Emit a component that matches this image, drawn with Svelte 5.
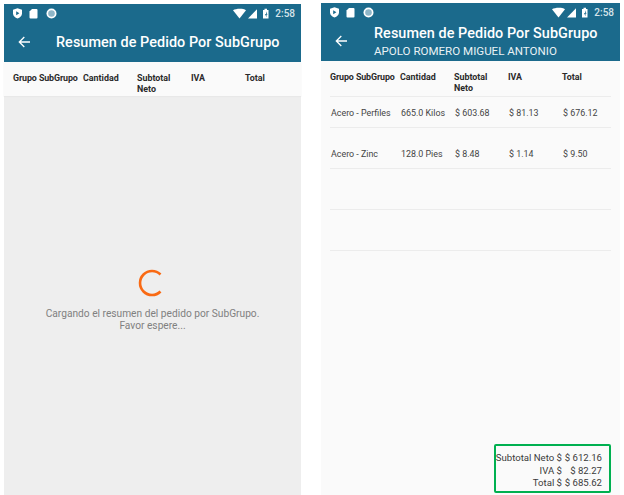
<script>
  const cols = ["Grupo SubGrupo", "Cantidad", "Subtotal Neto", "IVA", "Total"];
  const rows = [
    ["Acero - Perfiles", "665.0 Kilos", "$ 603.68", "$ 81.13", "$ 676.12"],
    ["Acero - Zinc", "128.0 Pies", "$ 8.48", "$ 1.14", "$ 9.50"],
    ["", "", "", "", ""],
    ["", "", "", "", ""]
  ];
  const totals = [
    ["Subtotal Neto $", "$ 612.16"],
    ["IVA $", "$ 82.27"],
    ["Total $", "$ 685.62"]
  ];
</script>

{#snippet statusbar()}
  <div class="status">
    <svg class="left-icons" width="46" height="11" viewBox="0 0 46 11">
      <path d="M1 1.800 5.500.3 10 1.800v3.700c0 2.400-2 4.100-4.500 5C3 9.600 1 7.900 1 5.500z" fill="#fff" />
      <path d="M4.200 3.200v4l3.200-2z" fill="#1b6a8c" />
      <path d="M20 1h4.500a1 1 0 0 1 1 1v7.500a1 1 0 0 1-1 1h-6a1 1 0 0 1-1-1V3.500z" fill="#fff" />
      <circle cx="39.500" cy="5.500" r="5" fill="#fff" />
      <circle cx="39.500" cy="5.500" r="3.300" fill="#8fb6c8" />
    </svg>
    <svg class="right-icons" width="37" height="11" viewBox="0 0 37 11">
      <path d="M0 2.300C3 .5 10 .2 13 2.300L6.500 10.500z" fill="#fff" />
      <path d="M15 10.500 24 1.200v9.300z" fill="#fff" />
      <path d="M30 2h1.500V.8h2.500V2h1.500v8.500H30z" fill="#fff" />
      <path d="M33.200 3.200v2.800h-1.200l1.500 3.200V6.800h1z" fill="#1b6a8c" />
    </svg>
    <span class="clock">2:58</span>
  </div>
{/snippet}

{#snippet arrow()}
  <svg class="arrow" width="12" height="12" viewBox="0 0 12 12" fill="none" stroke="#fff" stroke-width="1.300">
    <path d="M12 6H1.500M6.300 1 1.300 6l5 5" />
  </svg>
{/snippet}

{#snippet thead()}
  <div class="tr head">
    {#each cols as c}
      <div class="cell">{c}</div>
    {/each}
  </div>
{/snippet}

<div class="page">
  <section class="phone">
    {@render statusbar()}
    <header class="bar single">
      {@render arrow()}
      <div class="titles"><h1>Resumen de Pedido Por SubGrupo</h1></div>
    </header>
    <div class="table-head">
      {@render thead()}
    </div>
    <div class="loading">
      <svg width="30" height="30" viewBox="0 0 30 30" fill="none">
        <path d="M23.500 6.500a12 12 0 1 0 0 17" stroke="#f96a14" stroke-width="2.600" />
      </svg>
      <p>Cargando el resumen del pedido por SubGrupo.<br />Favor espere...</p>
    </div>
  </section>

  <section class="phone second">
    {@render statusbar()}
    <header class="bar">
      {@render arrow()}
      <div class="titles">
        <h1>Resumen de Pedido Por SubGrupo</h1>
        <h2>APOLO ROMERO MIGUEL ANTONIO</h2>
      </div>
    </header>
    <div class="content">
      <div class="table-head plain">
        {@render thead()}
      </div>
      {#each rows as r, i}
        <div class="tr row" class:first={i === 0}>
          {#each r as v}
            <div class="cell">{v}</div>
          {/each}
        </div>
      {/each}
      <div class="totals">
        {#each totals as t}
          <div class="total-line"><span>{t[0]}</span><span class="amount">{t[1]}</span></div>
        {/each}
      </div>
    </div>
  </section>
</div>

<style>
  :global(body) {
    background: #fff;
    font-family: Roboto, "Liberation Sans", sans-serif;
  }
  .page {
    display: flex;
    width: 624px;
    height: 495px;
    overflow: hidden;
    padding: 4px 0 0 4px;
    box-sizing: border-box;
  }
  .phone {
    width: 297px;
    display: flex;
    flex-direction: column;
    background: #fafafa;
  }
  .second {
    width: 299px;
    margin-left: 20px;
    margin-top: -1px;
  }
  .status {
    height: 18px;
    background: #1b6a8c;
    display: flex;
    align-items: center;
    padding: 0 6px 0 8px;
    color: #d6e4ea;
    font-size: 10px;
    font-weight: 500;
  }
  .left-icons {
    margin-right: auto;
  }
  .clock {
    margin-left: 5px;
  }
  .bar {
    height: 40px;
    background: #1b6a8c;
    display: flex;
    align-items: center;
    color: #fff;
    padding-left: 14px;
  }
  .arrow {
    flex: none;
  }
  .titles {
    margin-left: 27px;
    margin-top: 2px;
  }
  .single .titles {
    margin-left: 26px;
    margin-top: 1px;
  }
  h1 {
    margin: 0;
    font-size: 14.4px;
    font-weight: 500;
    line-height: 18px;
    white-space: nowrap;
    letter-spacing: 0.06px;
  }
  h2 {
    margin: 0;
    font-size: 11.55px;
    font-weight: 400;
    line-height: 16px;
    white-space: nowrap;
    color: #eaf2f5;
  }
  .table-head {
    padding: 11px 9px 0;
    height: 23px;
    box-shadow: 0 1px 1px #e8e8e8;
    position: relative;
  }
  .tr {
    display: grid;
    grid-template-columns: 70px 54px 54px 54px 54px;
    font-size: 8.9px;
    line-height: 11px;
  }
  .head {
    font-weight: 700;
    color: #2a2a2a;
  }
  .head .cell {
    padding-right: 12px;
    white-space: normal;
  }
  .head .cell:first-child {
    padding-right: 0;
    white-space: nowrap;
    letter-spacing: -0.1px;
  }
  .loading {
    flex: 1;
    background: #eeeeee;
    display: flex;
    flex-direction: column;
    align-items: center;
    padding-top: 172px;
  }
  .loading svg {
    margin-right: 1px;
  }
  .loading p {
    margin: 10px 0 0;
    font-size: 10.2px;
    line-height: 12px;
    color: #808080;
    text-align: center;
    white-space: nowrap;
  }
  .content {
    flex: 1;
    padding: 0 9px;
    display: flex;
    flex-direction: column;
  }
  .table-head.plain {
    padding: 11px 0 0;
    height: 24px;
    box-shadow: none;
    border-bottom: 1px solid #ececec;
  }
  .row {
    border-bottom: 1px solid #ececec;
    padding-top: 21px;
    height: 19px;
    color: #444;
  }
  .row.first {
    padding-top: 11px;
    height: 19px;
  }
  .row .cell {
    white-space: nowrap;
    font-weight: 400;
    padding-left: 1px;
  }
  .totals {
    margin-top: auto;
    margin-bottom: 2px;
    align-self: flex-end;
    width: 117px;
    border: 2px solid #00b050;
    border-radius: 2px;
    font-size: 9.6px;
    line-height: 12.5px;
    color: #3a3a3a;
    padding: 6px 0 0;
    box-sizing: border-box;
    height: 49px;
  }
  .total-line {
    display: flex;
    justify-content: flex-end;
    white-space: nowrap;
    padding-right: 7px;
  }
  .amount {
    width: 40px;
    text-align: right;
    flex: none;
  }
</style>
